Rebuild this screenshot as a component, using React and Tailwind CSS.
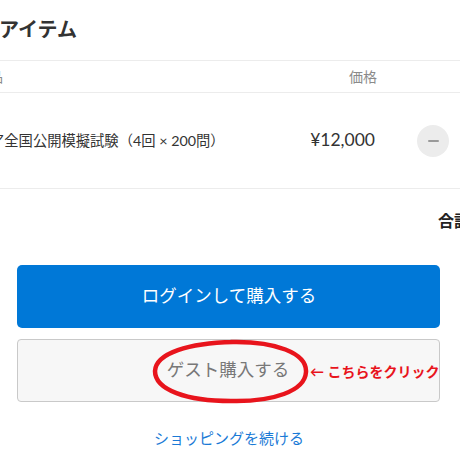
import React from 'react';

const font = { fontFamily: 'Lato, "Noto Sans CJK JP", sans-serif' };

function MinusButton() {
  return (
    <button className="w-8 h-8 rounded-full bg-[#ececec] flex items-center justify-center">
      <span className="block w-[11px] h-[2px] bg-[#9a9a9a] rounded" />
    </button>
  );
}

export default function App() {
  return (
    <div className="w-[460px] h-[460px] overflow-hidden bg-white text-[#333]" style={font}>
      {/* heading */}
      <div className="h-[60px] flex items-center pb-[2px]">
        <h2 className="text-[20px] font-semibold whitespace-nowrap text-[#333] ml-[-1px]">アイテム</h2>
      </div>

      {/* table head */}
      <div className="h-[33px] flex items-center border-t border-b border-[#ececec] text-[14px] text-[#8a8a8a]">
        <div className="flex-1 whitespace-nowrap ml-[-25px]">商品</div>
        <div className="w-[100px] text-right pr-[-2px]">価格</div>
        <div className="w-[83px]" />
      </div>

      {/* item row */}
      <div className="h-[96px] flex items-center border-b border-[#ececec]">
        <div className="flex-1 whitespace-nowrap text-[14.3px] text-[#333] ml-[-10px]">ア全国公開模擬試験（4回 × 200問）</div>
        <div className="w-[100px] text-right text-[17.5px] text-[#333]">¥12,000</div>
        <div className="w-[85px] pl-[42px] flex items-center">
          <MinusButton />
        </div>
      </div>

      {/* total */}
      <div className="h-[64px] flex items-center whitespace-nowrap">
        <span className="ml-[438px] text-[16px] font-bold text-[#222]">合計</span>
      </div>

      {/* buttons */}
      <div className="px-[17px] pt-[12px] flex flex-col gap-[11px] w-[457px]">
        <button className="h-[63px] w-full rounded-[5px] bg-[#0078d7] text-white text-[17.5px] flex items-center justify-center pl-[1px]">
          ログインして購入する
        </button>
        <div className="relative h-[63px] w-full rounded-[4px] bg-[#f7f7f7] border border-[#c9c9c9] flex items-center justify-center">
          <span className="text-[17.5px] text-[#787878] pr-[1px]">ゲスト購入する</span>
          <svg className="absolute left-[133px] top-[-1px]" width="160" height="66" viewBox="0 0 160 66">
            <path
              d="M80 3 C124 2 156 14 155 33 C154 52 122 63 80 62 C36 62 4 51 4 32 C5 14 38 4 82 3"
              fill="none"
              stroke="#e8141c"
              strokeWidth="4.5"
              strokeLinecap="round"
            />
          </svg>
          <span className="absolute left-[292px] top-[21px] text-[14px] font-bold text-[#e8141c] whitespace-nowrap">← こちらをクリック</span>
        </div>
      </div>

      <div className="pt-[25px] flex justify-center">
        <a className="text-[15px] text-[#1a7ad6] ml-[-2px]">ショッピングを続ける</a>
      </div>
    </div>
  );
}
